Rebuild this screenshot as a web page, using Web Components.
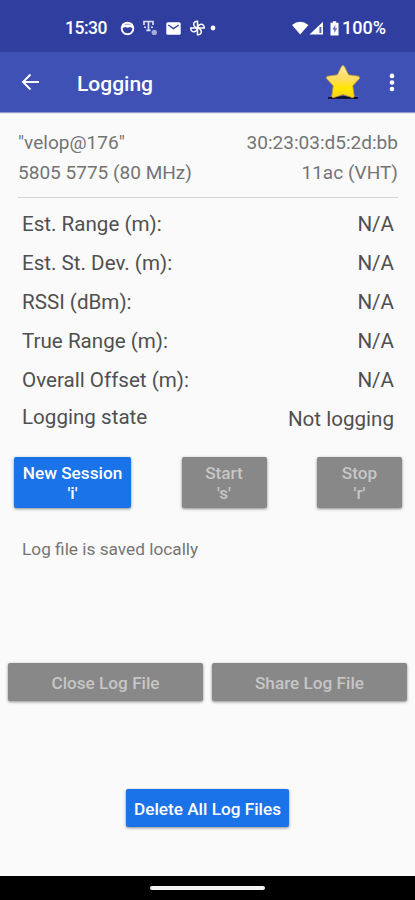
<!DOCTYPE html>
<html lang="en">
<head>
<meta charset="utf-8">
<title>Logging</title>
<style>
html,body{margin:0;height:100%}
body{font-family:Roboto,"Liberation Sans",sans-serif;background:#fafafa}
</style>
</head>
<body>
<logging-screen></logging-screen>
<script>
const define = (name, html) => customElements.define(name, class extends HTMLElement {
  constructor() {
    super();
    const t = document.createElement('template');
    t.innerHTML = html;
    this.attachShadow({mode: 'open'}).append(t.content.cloneNode(true));
  }
});

define('status-bar', `
<style>
:host{display:flex;height:52px;box-sizing:border-box;padding:4px 29px 0 65px;align-items:center;background:#303f9f;color:#fff;font:500 17.5px/20px Roboto,sans-serif}
svg{display:block;flex:none}
.time{width:55px;letter-spacing:-.5px}
.icons{display:flex;align-items:center;gap:8px;flex:1}
.icons svg:last-child{margin-left:1px}
.right{display:flex;align-items:center}
.right span{font-size:18px}
</style>
<span class="time">15:30</span>
<div class="icons">
<svg width="15" height="15" viewBox="0 0 15 15"><circle cx="7.5" cy="7.5" r="5.8" fill="none" stroke="#fff" stroke-width="1.900"/><path d="M2 2.700h11v4q-2 .3-3.300-.7-2 1.500-4 0Q4 7 2 6.700z" fill="#fff"/><path d="M4.500 3.600h6" stroke="#303f9f" stroke-width=".8" opacity=".5"/></svg>
<svg width="15" height="16" viewBox="0 0 15 16"><path d="M1 5V1.500h9V5M5.500 1.500v8.500M3.300 10.300h4.400" fill="none" stroke="#d9def5" stroke-width="1.700"/><path d="M1 7.200h2M8 7.200h2" stroke="#d9def5" stroke-width="1.600"/><circle cx="11.300" cy="12.400" r="2.700" fill="#a4add9"/></svg>
<svg width="15" height="13" viewBox="0 0 15 13"><rect x=".3" y=".3" width="14.400" height="12.400" rx="1.500" fill="#fff"/><path d="M2.300 3l5.200 3.600L12.700 3" fill="none" stroke="#303f9f" stroke-width="1.300"/></svg>
<svg width="26" height="16" viewBox="0 0 26 16"><g fill="none" stroke="#fff" stroke-width="1.500"><path d="M7.500 8V1.200C4.600 1.200 3.600 3 3.700 4.500S5.500 8 7.500 8z"/><path d="M7.500 8V1.200C4.600 1.200 3.600 3 3.700 4.500S5.500 8 7.500 8z" transform="rotate(90 7.500 8)"/><path d="M7.500 8V1.200C4.600 1.200 3.600 3 3.700 4.500S5.500 8 7.500 8z" transform="rotate(180 7.500 8)"/><path d="M7.500 8V1.200C4.600 1.200 3.600 3 3.700 4.500S5.500 8 7.500 8z" transform="rotate(270 7.500 8)"/></g><circle cx="23" cy="8" r="2.400" fill="#fff"/></svg>
</div>
<div class="right">
<svg width="50" height="17" viewBox="0 0 50 17"><path d="M0 5Q8.200-1.500 16.400 5L8.200 14.600z" fill="#fff"/><path d="M17.500 14.500L31 1.800v12.700z" fill="#fff"/><path d="M27.400 7h2v6h-2z" fill="#5663b2"/><path d="M40.800 1.200h3.400v1.600h2.300v12.700h-8V2.800h2.300z" fill="#fff"/><path d="M43.300 5l-3 4.500h2V13l3-4.700h-2z" fill="#303f9f" opacity=".75"/></svg>
<span>100%</span>
</div>`);

define('app-bar', `
<style>
:host{display:flex;height:60px;box-sizing:border-box;padding:0 20px 0 21px;align-items:center;background:#3f51b5;color:#fff;box-shadow:0 1px 1px #8f98c8}
svg{display:block;flex:none}
h1{margin:4px 0 0 37px;flex:1;font:500 21px/28px Roboto,sans-serif}
.dots{margin-left:28px}
</style>
<svg width="19" height="18" viewBox="0 0 19 18"><path d="M18 9H2.200M9.500 1.500L2 9l7.500 7.500" fill="none" stroke="#fff" stroke-width="1.900"/></svg>
<h1><slot></slot></h1>
<svg width="36" height="36" viewBox="0 0 36 36"><defs><linearGradient id="g" x2="0" y2="1"><stop stop-color="#ffe9a0"/><stop offset=".45" stop-color="#ffdc58"/><stop offset=".7" stop-color="#ffe800"/><stop offset="1" stop-color="#fcd020"/></linearGradient></defs><path d="M3 33.200q15-1.800 30 0v1.600H3z" fill="#080b1c"/><path d="M16.600 2.200Q18 .8 19.300 2.200L23.600 10.800 33.600 12.200Q35.400 13 34.500 14.600L27.800 21.800 29.300 32.300Q28.900 34.200 27 33.600L18 30.600 9 33.600Q7.100 34.200 6.700 32.300L8.200 21.800 1.500 14.600Q.6 13 2.400 12.200L12.400 10.800z" fill="url(#g)" stroke="#b5933e" stroke-width=".8" stroke-linejoin="round"/></svg>
<svg class="dots" width="6" height="20" viewBox="0 0 6 20"><g fill="#fff"><circle cx="3" cy="3.900" r="2.300"/><circle cx="3" cy="10.500" r="2.300"/><circle cx="3" cy="17" r="2.300"/></g></svg>`);

define('network-row', `
<style>
:host{display:flex;justify-content:space-between;height:30px;font-size:19.050px;line-height:30px;color:#747474;white-space:nowrap}
</style><slot name="left"></slot><slot name="right"></slot>`);

define('data-row', `
<style>
:host{display:flex;justify-content:space-between;align-items:center;height:38.900px;padding:0 4px;font-size:20.600px;line-height:24px;color:#505050;white-space:nowrap}
</style><slot name="label"></slot><slot name="value"></slot>`);

define('raised-button', `
<style>
:host{display:flex;align-items:center;justify-content:center;box-sizing:border-box;padding-top:1px;text-align:center;border-radius:2px;background:#888;color:#c6c6c6;font:500 17.200px/20px Roboto,sans-serif;box-shadow:0 1px 3px rgba(0,0,0,.45);white-space:nowrap}
:host([primary]){background:#1a73e8;color:#fff}
</style><div><slot></slot></div>`);

define('nav-handle', `
<style>
:host{display:flex;height:24px;background:#000;align-items:center;justify-content:center}
i{width:115px;height:4px;margin-top:-1px;border-radius:2px;background:#f4f4f4}
</style><i></i>`);

define('logging-screen', `
<style>
:host{display:flex;flex-direction:column;width:415px;height:900px;background:#fafafa}
.net{margin:16px 17px 0 18px;padding-bottom:9px;border-bottom:1px solid #d4d4d4}
.data{margin:7px 17px 0 18px}
.state [slot=label]{margin-top:-4px}
.state{height:39px}
.actions{display:flex;justify-content:space-between;margin:19px 13px 0 14px}
.actions raised-button{height:51px}
.note{margin:31px 22px 0;font-size:17.250px;line-height:20px;color:#757575}
.files{display:grid;grid-template-columns:1fr 1fr;gap:9px;margin:104px 8px 0}
.files raised-button{height:38px}
.del{width:163px;height:38px;margin:88px 0 0 126px}
nav-handle{margin-top:auto}
</style>
<status-bar></status-bar>
<app-bar>Logging</app-bar>
<section class="net">
<network-row><span slot="left">"velop@176"</span><span slot="right">30:23:03:d5:2d:bb</span></network-row>
<network-row><span slot="left">5805 5775 (80 MHz)</span><span slot="right">11ac (VHT)</span></network-row>
</section>
<section class="data">
<data-row><span slot="label">Est. Range (m):</span><span slot="value">N/A</span></data-row>
<data-row><span slot="label">Est. St. Dev. (m):</span><span slot="value">N/A</span></data-row>
<data-row><span slot="label">RSSI (dBm):</span><span slot="value">N/A</span></data-row>
<data-row><span slot="label">True Range (m):</span><span slot="value">N/A</span></data-row>
<data-row><span slot="label">Overall Offset (m):</span><span slot="value">N/A</span></data-row>
<data-row class="state"><span slot="label">Logging state</span><span slot="value">Not logging</span></data-row>
</section>
<section class="actions">
<raised-button primary style="width:117px">New Session<br>'i'</raised-button>
<raised-button style="width:85px">Start<br>'s'</raised-button>
<raised-button style="width:85px">Stop<br>'r'</raised-button>
</section>
<div class="note">Log file is saved locally</div>
<section class="files"><raised-button>Close Log File</raised-button><raised-button>Share Log File</raised-button></section>
<raised-button class="del" primary>Delete All Log Files</raised-button>
<nav-handle></nav-handle>`);
</script>
</body>
</html>
